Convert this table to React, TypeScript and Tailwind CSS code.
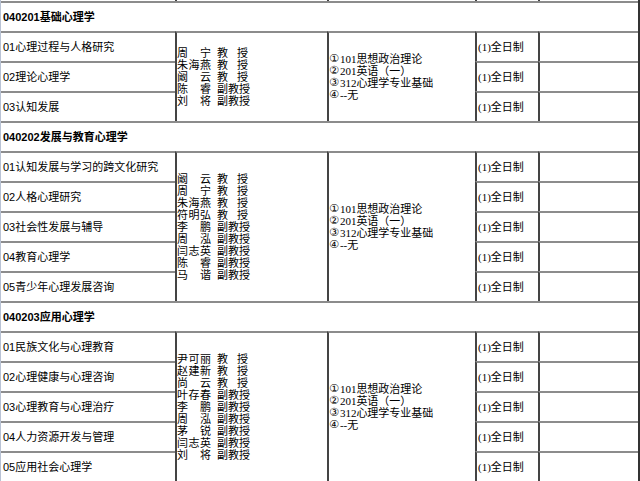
const cjk = "font-['Liberation_Sans','Noto_Sans_CJK_SC',sans-serif]";
const serif = "font-['Liberation_Serif','Noto_Sans_CJK_SC',serif]";

type Block = {
  code: string;
  rows: string[];
  teachers: [string, string][];
};

const EXAMS: [string, string][] = [
  ["①", "101思想政治理论"],
  ["②", "201英语（一）"],
  ["③", "312心理学专业基础"],
  ["④", "--无"],
];

const blocks: Block[] = [
  {
    code: "040201基础心理学",
    rows: ["01心理过程与人格研究", "02理论心理学", "03认知发展"],
    teachers: [
      ["周宁", "教授"],
      ["朱海燕", "教授"],
      ["阚云", "教授"],
      ["陈睿", "副教授"],
      ["刘将", "副教授"],
    ],
  },
  {
    code: "040202发展与教育心理学",
    rows: ["01认知发展与学习的跨文化研究", "02人格心理研究", "03社会性发展与辅导", "04教育心理学", "05青少年心理发展咨询"],
    teachers: [
      ["阚云", "教授"],
      ["周宁", "教授"],
      ["朱海燕", "教授"],
      ["符明弘", "教授"],
      ["李鹏", "副教授"],
      ["周泓", "副教授"],
      ["闫志英", "副教授"],
      ["陈睿", "副教授"],
      ["马谐", "副教授"],
    ],
  },
  {
    code: "040203应用心理学",
    rows: ["01民族文化与心理教育", "02心理健康与心理咨询", "03心理教育与心理治疗", "04人力资源开发与管理", "05应用社会心理学"],
    teachers: [
      ["尹可丽", "教授"],
      ["赵建新", "教授"],
      ["尚云", "教授"],
      ["叶存春", "副教授"],
      ["李鹏", "副教授"],
      ["周泓", "副教授"],
      ["茅锐", "副教授"],
      ["闫志英", "副教授"],
      ["刘将", "副教授"],
    ],
  },
];

function Spread({ text, className }: { text: string; className: string }) {
  return (
    <span className={`flex justify-between ${className}`}>
      {text.split("").map((c, i) => (
        <span key={i}>{c}</span>
      ))}
    </span>
  );
}

function Section({ block }: { block: Block }) {
  const n = block.rows.length;
  return (
    <>
      <div className="flex h-[30px] items-center border-t-2 border-[#8c8c8c] pl-[2px] text-[11px] font-bold">
        {block.code}
      </div>
      <div className="grid grid-cols-[174px_152px_148px_63px_1fr]" style={{ gridTemplateRows: `repeat(${n}, 30px)` }}>
        {block.rows.map((r, i) => (
          <div
            key={r}
            className="col-start-1 flex items-center border-t-2 border-[#8c8c8c] pl-[2px] text-[11px]"
            style={{ gridRow: i + 1 }}
          >
            {r}
          </div>
        ))}
        <div
          className="col-start-2 flex flex-col justify-center border-t-2 border-l-2 border-t-[#8c8c8c] border-l-[#444] text-[11px] leading-[12px]"
          style={{ gridRow: `1 / span ${n}` }}
        >
          {block.teachers.map(([name, title], i) => (
            <div key={i} className="flex">
              <Spread text={name} className="w-[34px]" />
              <Spread text={title} className="ml-[6px] w-[31px]" />
            </div>
          ))}
        </div>
        <div
          className={`col-start-3 flex flex-col justify-center border-t-2 border-l-2 border-t-[#8c8c8c] border-l-[#444] text-[11px] leading-[12px] ${serif}`}
          style={{ gridRow: `1 / span ${n}` }}
        >
          {EXAMS.map(([mark, text]) => (
            <div key={mark} className="flex h-[12px] items-center gap-[1px]">
              <span className="text-[11px] leading-[12px] font-['DejaVu_Sans',sans-serif]">{mark}</span>
              <span>{text}</span>
            </div>
          ))}
        </div>
        {block.rows.map((r, i) => (
          <div
            key={"m" + r}
            className={`col-start-4 flex items-center border-t-2 border-l-2 border-t-[#8c8c8c] border-l-[#444] pl-[1px] text-[11px] ${serif}`}
            style={{ gridRow: i + 1 }}
          >
            (1)全日制
          </div>
        ))}
        {block.rows.map((r, i) => (
          <div
            key={"e" + r}
            className="col-start-5 border-t-2 border-l-2 border-t-[#8c8c8c] border-l-[#444]"
            style={{ gridRow: i + 1 }}
          />
        ))}
      </div>
    </>
  );
}

export default function App() {
  return (
    <div className={`h-[481px] w-[640px] overflow-hidden bg-white text-black ${cjk}`}>
      <div className="border-l border-r-2 border-l-[#b8c2d4] border-r-[#333]">
        <div className="grid h-[1px] grid-cols-[174px_152px_148px_63px_1fr]">
          <div />
          <div className="border-l-2 border-[#444]" />
          <div className="border-l-2 border-[#444]" />
          <div className="border-l-2 border-[#444]" />
          <div className="border-l-2 border-[#444]" />
        </div>
        {blocks.map((b) => (
          <Section key={b.code} block={b} />
        ))}
      </div>
    </div>
  );
}
